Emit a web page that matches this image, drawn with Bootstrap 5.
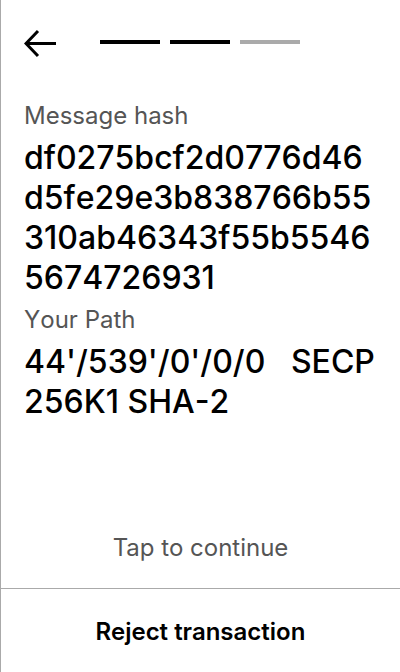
<!DOCTYPE html>
<html lang="en">
<head>
<meta charset="utf-8">
<meta name="viewport" content="width=device-width, initial-scale=1">
<title>Review message</title>
<link href="https://cdn.jsdelivr.net/npm/bootstrap@5.3.0/dist/css/bootstrap.min.css" rel="stylesheet">
<style>
body { font-family: Inter, sans-serif; font-kerning: none; background: #fff; color: #000; }
.device { border-left: 1px solid #aaa; }
.topbar { height: 84px; padding: 0 24px 0 23px; }
.back { width: 32px; height: 32px; color: #000; }
.step { width: 60px; height: 4px; background: #000; }
.step-next { background: #aaa; }
.steps { gap: 10px; }
.review { padding: 16px 23px 0; }
.caption { font-size: 24px; line-height: 32px; font-weight: 400; color: #555; }
.value { font-size: 32px; line-height: 40px; font-weight: 500; margin: 6px 0; white-space: pre-wrap; word-break: break-all; }
.tap { font-size: 24px; line-height: 32px; color: #555; padding: 24px; }
.reject { font-size: 24px; line-height: 32px; font-weight: 600; color: #000; padding: 27px 24px 24px; border-top: 1px solid #aaa !important; }
</style>
<script src="https://cdn.jsdelivr.net/npm/bootstrap@5.3.0/dist/js/bootstrap.bundle.min.js"></script>
</head>
<body>
<main class="device d-flex flex-column min-vh-100">
  <header class="topbar d-flex align-items-center">
    <button type="button" class="back border-0 bg-transparent p-0 d-flex" aria-label="Back">
      <svg width="32" height="32" viewBox="0 0 32 32" fill="none" stroke="currentColor" stroke-width="3"><path d="M32 17.5H2M14 5L2 17.5 14 30"/></svg>
    </button>
    <div class="steps d-flex flex-fill justify-content-center" role="progressbar" aria-label="Step" aria-valuenow="2" aria-valuemin="0" aria-valuemax="3">
      <span class="step"></span><span class="step"></span><span class="step step-next"></span>
    </div>
    <span class="back"></span>
  </header>
  <dl class="review flex-fill mb-0">
    <dt class="caption">Message hash</dt>
    <dd class="value">df0275bcf2d0776d46<wbr>d5fe29e3b838766b55<wbr>310ab46343f55b5546<wbr>5674726931</dd>
    <dt class="caption">Your Path</dt>
    <dd class="value">44'/539'/0'/0/0   SECP256K1 SHA-2</dd>
  </dl>
  <button type="button" class="tap border-0 bg-transparent text-center">Tap to continue</button>
  <button type="button" class="reject border-0 bg-transparent text-center">Reject transaction</button>
</main>
</body>
</html>
